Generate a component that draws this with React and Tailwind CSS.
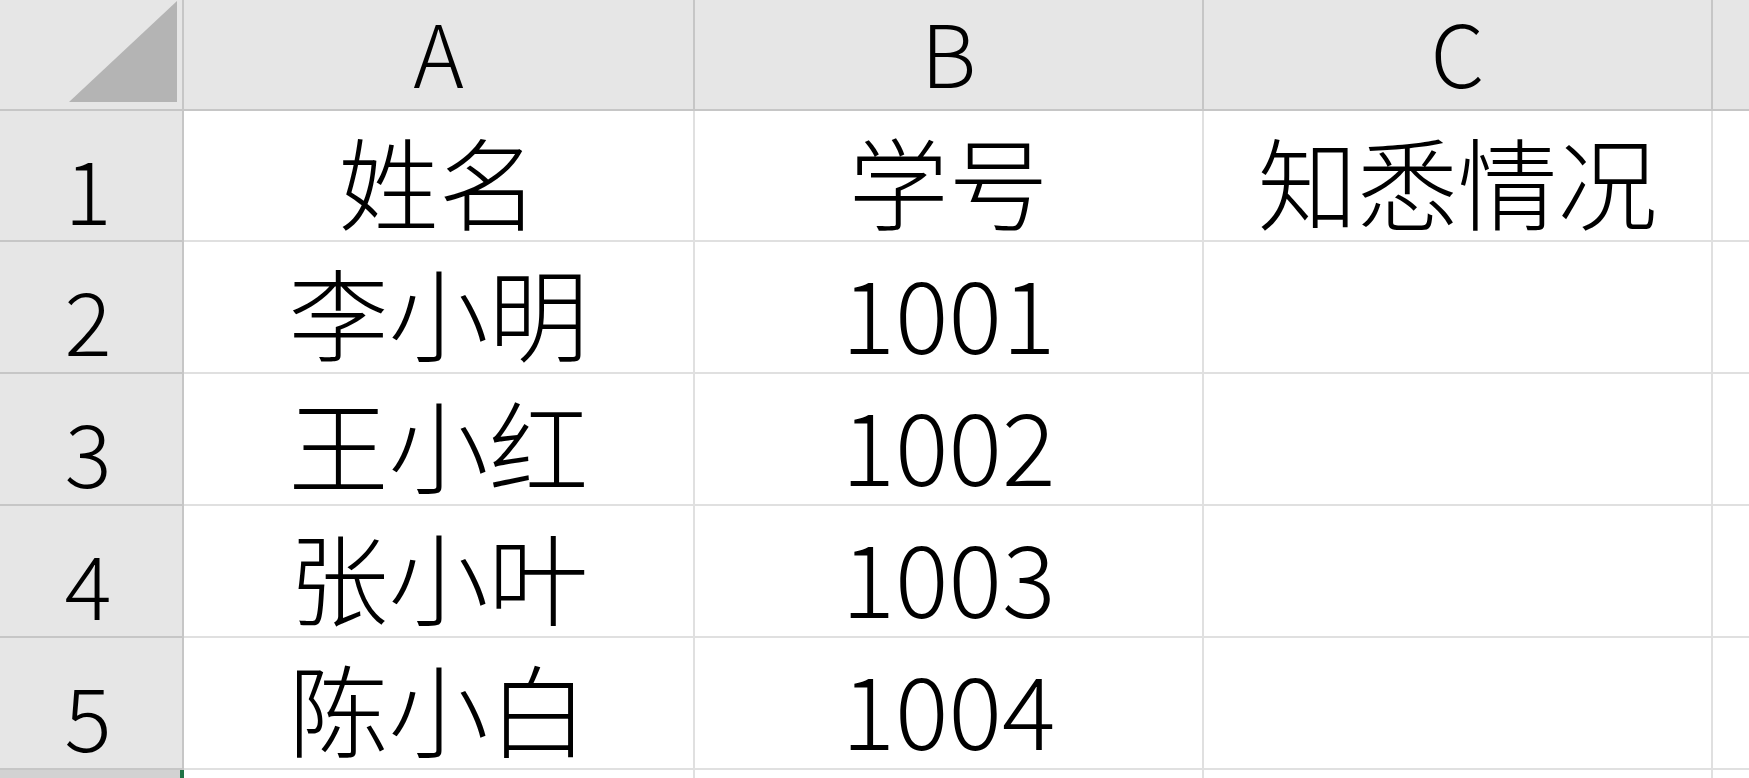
const COLS = ["A", "B", "C"];

const ROWS = [
  ["姓名", "学号", "知悉情况"],
  ["李小明", "1001", ""],
  ["王小红", "1002", ""],
  ["张小叶", "1003", ""],
  ["陈小白", "1004", ""],
];

const font = { fontFamily: '"Noto Sans CJK SC", "Noto Sans", sans-serif' };

function HeaderCell({ children }) {
  return (
    <div className="flex items-center justify-center pb-[8px] bg-[#e6e6e6] border-r-2 border-b-2 border-[#c6c6c6] text-[86px] leading-none font-light text-black">
      {children}
    </div>
  );
}

function RowHead({ children }) {
  return (
    <div className="flex items-center justify-center pt-[22px] pr-[6px] bg-[#e6e6e6] border-r-2 border-b-2 border-[#c6c6c6] text-[88px] leading-none font-light text-black">
      {children}
    </div>
  );
}

function Cell({ children }) {
  return (
    <div className="flex items-center justify-center pt-[8px] bg-white border-r-2 border-b-2 border-[#e0e0e0] text-[100px] leading-none font-light text-black whitespace-nowrap">
      {children}
    </div>
  );
}

export default function App() {
  return (
    <div
      className="w-[1749px] h-[778px] overflow-hidden bg-white grid grid-cols-[184px_511px_509px_509px_1fr] grid-rows-[111px_131px_132px_132px_132px_132px_1fr]"
      style={font}
    >
      {/* corner */}
      <div className="relative bg-[#e6e6e6] border-r-2 border-b-2 border-[#c6c6c6]">
        <div className="absolute right-[5px] bottom-[7px] w-0 h-0 border-l-[108px] border-l-transparent border-b-[101px] border-b-[#b4b4b4]" />
      </div>
      {COLS.map((c) => (
        <HeaderCell key={c}>{c}</HeaderCell>
      ))}
      <div className="bg-[#e6e6e6] border-b-2 border-[#c6c6c6]" />

      {ROWS.map((row, i) => (
        <div key={i} className="contents">
          <RowHead>{i + 1}</RowHead>
          {row.map((v, j) => (
            <Cell key={j}>{v}</Cell>
          ))}
          <div className="bg-white border-b-2 border-[#e0e0e0]" />
        </div>
      ))}

      {/* row 6, mostly cut off */}
      <div className="bg-[#d2d2d2] border-r-4 border-[#217346]" />
      <div className="bg-white border-r-2 border-[#e0e0e0]" />
      <div className="bg-white border-r-2 border-[#e0e0e0]" />
      <div className="bg-white border-r-2 border-[#e0e0e0]" />
      <div className="bg-white" />
    </div>
  );
}
